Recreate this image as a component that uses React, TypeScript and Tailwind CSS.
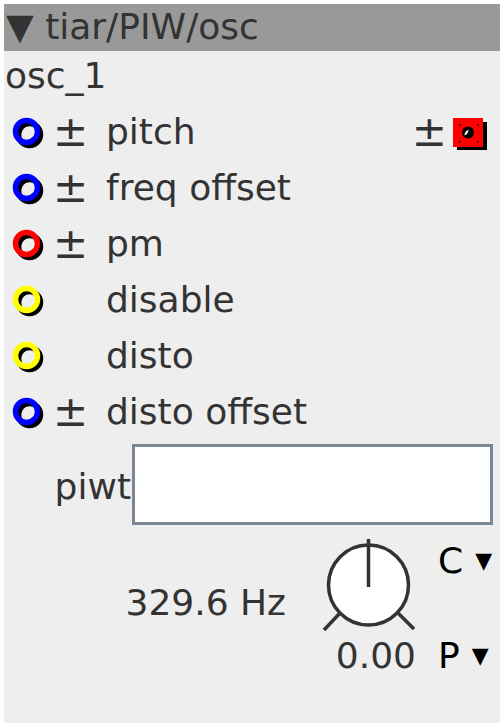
import React from "react";

type Port = {
  label: string;
  color: string;
  bipolar: boolean;
  mod?: boolean;
};

const ports: Port[] = [
  { label: "pitch", color: "#0000ff", bipolar: true, mod: true },
  { label: "freq offset", color: "#0000ff", bipolar: true },
  { label: "pm", color: "#ff0000", bipolar: true },
  { label: "disable", color: "#ffff00", bipolar: false },
  { label: "disto", color: "#ffff00", bipolar: false },
  { label: "disto offset", color: "#0000ff", bipolar: true },
];

function Jack({ color }: { color: string }) {
  return (
    <svg width="36" height="36" viewBox="0 0 36 36" className="shrink-0">
      <circle cx="19.5" cy="20.5" r="11" fill="none" stroke="#000" strokeWidth="5.5" />
      <circle cx="16.5" cy="17.5" r="11" fill="none" stroke={color} strokeWidth="5.5" />
    </svg>
  );
}

function ModSquare() {
  return (
    <svg width="36" height="36" viewBox="0 0 36 36" className="shrink-0">
      <rect x="5" y="8" width="30" height="29" fill="#000" />
      <rect x="1" y="4" width="30" height="29" fill="#ff0000" />
      <circle cx="16" cy="18.5" r="6" fill="#000" />
      <path d="M12.5 21.5 A5 5 0 0 1 17 16 L15 20 Z" fill="#fff" />
      {[
        [7, 10],
        [25, 10],
        [7, 27],
        [25, 27],
      ].map(([x, y], i) => (
        <rect key={i} x={x} y={y} width="1.5" height="1.5" fill="#000" />
      ))}
    </svg>
  );
}

function Knob() {
  return (
    <svg width="96" height="108" viewBox="0 0 96 108" className="block">
      <circle cx="46.5" cy="55" r="40" fill="#fff" stroke="#333" strokeWidth="3.5" />
      <line x1="46.5" y1="9" x2="46.5" y2="57" stroke="#333" strokeWidth="3.5" />
      <line x1="2" y1="100" x2="18" y2="83" stroke="#333" strokeWidth="3.5" />
      <line x1="76" y1="83" x2="92" y2="99" stroke="#333" strokeWidth="3.5" />
    </svg>
  );
}

export default function App() {
  return (
    <div className="w-[504px] h-[728px] bg-white pt-[4px] px-[4px] font-['DejaVu_Sans',sans-serif]">
      <div className="w-[496px] h-[719px] bg-[#eeeeee] flex flex-col text-[36px] text-[#333]">
        {/* title bar */}
        <div className="h-[47px] leading-[46px] bg-[#999999] px-[2px] whitespace-nowrap">
          ▼ tiar/PIW/osc
        </div>
        <div className="h-[53px] leading-[50px] px-[1px]">osc_1</div>

        {ports.map((p) => (
          <div key={p.label} className="h-[56px] leading-[56px] flex items-center pl-[6px] pr-[12px]">
            <Jack color={p.color} />
            <span className="w-[60px] pl-[7px] text-[42px]">{p.bipolar ? "±" : ""}</span>
            <span className="whitespace-nowrap">{p.label}</span>
            {p.mod && (
              <div className="ml-auto flex items-center">
                <span className="text-[42px] mr-[5px]">±</span>
                <ModSquare />
              </div>
            )}
          </div>
        ))}

        {/* table input */}
        <div className="h-[90px] flex items-start pt-[4px] pr-[7px]">
          <span className="w-[128px] text-right pr-[1px] pt-[25px] leading-[36px]">piwt</span>
          <div className="flex-1 h-[81px] bg-white border-[3px] border-[#7b8794]" />
        </div>

        {/* frequency knob */}
        <div className="flex-1 flex">
          <div className="w-[318px] pt-[55px] pr-[36px] text-right leading-[36px] whitespace-nowrap">
            329.6 Hz
          </div>
          <div className="w-[96px] flex flex-col">
            <Knob />
            <div className="leading-[36px] text-right pr-[2px] whitespace-nowrap">0.00</div>
          </div>
          <div className="flex-1 pl-[20px] pt-[13px] flex flex-col text-black leading-[36px]">
            <span className="whitespace-nowrap">
              C<span className="ml-[12px] text-[22px] align-top">▼</span>
            </span>
            <span className="mt-[59px] whitespace-nowrap">
              P<span className="ml-[12px] text-[22px] align-top">▼</span>
            </span>
          </div>
        </div>
      </div>
    </div>
  );
}
